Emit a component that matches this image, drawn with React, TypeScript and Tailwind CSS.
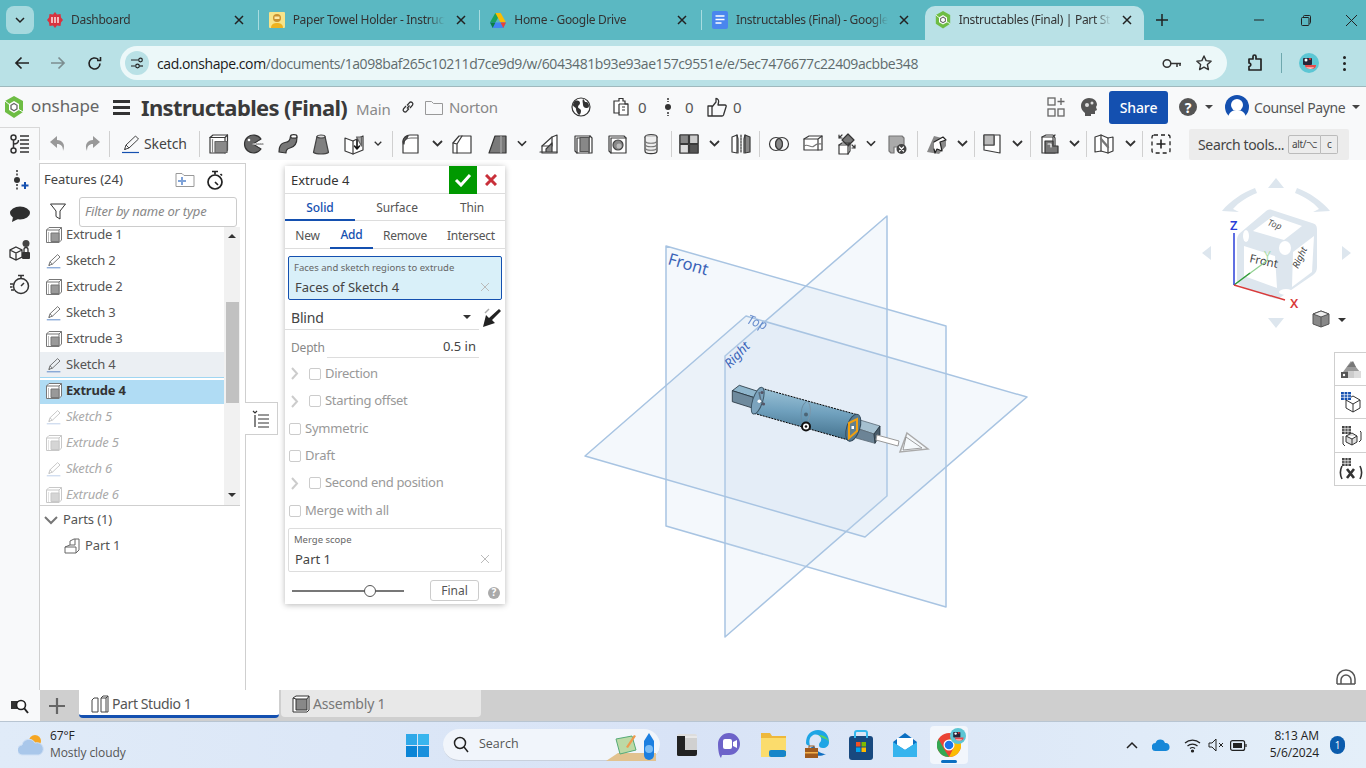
import React from "react";

type P = { children?: React.ReactNode; className?: string };

const I = ({ children, s = 22, v = 22, className = "" }: P & { s?: number; v?: number }) => (
  <svg width={s} height={s} viewBox={`0 0 ${v} ${v}`} fill="none" stroke="#3a3a3a" strokeWidth={1.2} strokeLinejoin="round" strokeLinecap="round" className={"shrink-0 " + className}>
    {children}
  </svg>
);

const Slot = ({ w, children }: { w: string; children?: React.ReactNode }) => (
  <div className={w + " h-full shrink-0 flex items-center justify-center"}>{children}</div>
);
const Sep = () => <div className="w-px h-[26px] bg-[#d0d0d0] shrink-0" />;
const Chev = () => (
  <svg width="11" height="7" viewBox="0 0 11 7" fill="none" stroke="#333" strokeWidth="1.8"><path d="M1 1l4.5 4.5L10 1" /></svg>
);

const ExtrudeIc = () => (
  <I>
    <path d="M2 4.5L5 2h14.5v15L17 20H2z" fill="#fff" />
    <path d="M2 4.5h15V20M17 4.5L19.5 2" />
    <rect x="7" y="8.5" width="12" height="11" fill="#8a8a8a" stroke="#666" />
    <path d="M4.5 6.5v13" stroke="#888" />
  </I>
);
const FeatExtrude = () => (
  <svg width="16" height="16" viewBox="0 0 16 16" fill="none" stroke="#777" strokeWidth="1" strokeLinejoin="round" className="shrink-0">
    <path d="M.5 3L3 .5h12.500V13L13 15.500H.5z" fill="#fff" />
    <path d="M.5 3h12.500v12.500M13 3l2.500-2.500" />
    <path d="M2.500 5v10" stroke="#bbb" />
    <rect x="5" y="6" width="8" height="8.500" fill="#999" stroke="#777" />
  </svg>
);
const RevolveIc = () => (
  <I>
    <path d="M19 6A9 9 0 1 0 19 16L11 11z" fill="#666" stroke="#333" />
    <circle cx="7" cy="7" r="1.3" fill="#fff" stroke="none" />
    <path d="M11 11h9M17 9l-2 2 2 2" stroke="#fff" strokeDasharray="1.6 1.2" />
    <path d="M14 11h8" stroke="#555" strokeDasharray="1 1" />
  </I>
);
const SweepIc = () => (
  <I>
    <path d="M2 19c0-6 1.5-9 6-9.5 4-.5 5-2 5.5-6.5L20 4c0 6-2 10-7 11-2.500.5-4 1.500-4 5z" fill="#777" stroke="#333" />
    <ellipse cx="16.800" cy="3.400" rx="3.200" ry="1.800" fill="#fff" stroke="#333" />
  </I>
);
const LoftIc = () => (
  <I>
    <path d="M7 3.500h8l3.500 16c-3 2-12 2-15 0z" fill="#808080" stroke="#444" />
    <ellipse cx="11" cy="3.500" rx="4" ry="1.500" fill="#ddd" stroke="#444" />
  </I>
);
const ThickenIc = () => (
  <I>
    <path d="M2 5l8 3 10-5v14l-10 4-8-3z" fill="#fff" />
    <path d="M10 8v13" />
    <path d="M13.500 4h5v9z" fill="#aaa" stroke="#666" />
    <path d="M14 7v9M11.500 13l2.500 3 2.500-3" stroke="#111" strokeWidth="1.600" />
  </I>
);
const FilletIc = () => (
  <I>
    <path d="M3 20V9c0-4 3-7 7-7h8v18z" fill="#fff" />
    <path d="M3 11c1-4 4-6 8-6h7" stroke="#666" />
    <path d="M3 9c0-3 2-5 5-6l-1 2c-2 1-3 3-3 6z" fill="#999" />
  </I>
);
const ChamferIc = () => (
  <I>
    <path d="M2 10l6-7h12v17H2z" fill="#fff" />
    <path d="M2 10l4 1 5-8M6 11v9" />
  </I>
);
const DraftIc = () => (
  <I>
    <path d="M8 3h11v17H2z" fill="#7a7a7a" stroke="#333" />
    <path d="M14 3v17" stroke="#aaa" />
  </I>
);
const RibIc = () => (
  <I>
    <path d="M4 20V13l10-9 5-2v18z" fill="#fff" />
    <path d="M14 4v9L4 13" />
    <path d="M2 19h17M8 16l6-6v9H8z" fill="#888" />
  </I>
);
const ShellIc = () => (
  <I>
    <path d="M3 3h15l2 2v15H5l-2-2z" fill="#fff" />
    <path d="M5 5h12v15M5 5v15M18 3l-1 2" />
    <rect x="8" y="4.500" width="9" height="14" fill="#888" stroke="#555" />
  </I>
);
const HoleIc = () => (
  <I>
    <path d="M3 3h15l2 2v15H5l-2-2z" fill="#fff" />
    <path d="M5 5h15M5 5v15" />
    <circle cx="12" cy="12" r="5" fill="#888" stroke="#444" />
    <circle cx="13" cy="13" r="2.500" fill="#bbb" stroke="none" />
  </I>
);
const HelixIc = () => (
  <I>
    <ellipse cx="11" cy="4" rx="6" ry="2.500" fill="#ccc" stroke="#444" />
    <path d="M5 4v14c0 3.500 12 3.500 12 0V4" fill="#eee" />
    <path d="M5 8c1 3 11 3 12 0M5 11.500c1 3 11 3 12 0M5 15c1 3 11 3 12 0" stroke="#777" />
  </I>
);
const PatternIc = () => (
  <I>
    <rect x="2" y="2" width="18" height="18" fill="#fff" />
    <rect x="2" y="2" width="8.500" height="8.500" fill="#888" />
    <rect x="2" y="11.500" width="8.500" height="8.500" fill="#ddd" />
    <rect x="11.500" y="11.500" width="8.500" height="8.500" fill="#555" />
    <rect x="11.500" y="2" width="8.500" height="8.500" fill="#ccc" />
  </I>
);
const MirrorIc = () => (
  <I>
    <path d="M2 4l5-2v18l-5-1z" fill="#fff" />
    <path d="M20 4l-5-2v18l5-1z" fill="#888" />
    <path d="M7 2l1 4v14M15 2l-1 4v14" />
    <path d="M11 2v18" strokeDasharray="2 1" />
  </I>
);
const BooleanIc = () => (
  <I>
    <circle cx="8" cy="11" r="6.500" fill="#fff" />
    <circle cx="14" cy="11" r="6.500" fill="#fff" fillOpacity=".1" />
    <path d="M11 5.300a6.500 6.500 0 0 1 0 11.400a6.500 6.500 0 0 1 0-11.400z" fill="#888" />
  </I>
);
const SplitIc = () => (
  <I>
    <path d="M2 6l5-3h13v14H2z" fill="#fff" />
    <path d="M2 6h14l4-3M16 6v11" />
    <path d="M2 13c4-3 7 3 10 0s5-2 8-2" stroke="#777" />
  </I>
);
const TransformIc = () => (
  <I>
    <path d="M12 1l6 6-6 6-6-6z" fill="#777" stroke="#333" />
    <path d="M3 12h9v9H3z" fill="#fff" />
    <path d="M3 12l3-2h8M12 12l2-2v8l-2 3" />
    <path d="M16 12l3 3M19 12v3h-3" />
    <path d="M6 2L3 5M3 2v3h3" />
  </I>
);
const DeleteIc = () => (
  <I>
    <path d="M3 3h13l2 2v9H8v6H5l-2-2z" fill="#aaa" stroke="#777" />
    <circle cx="15.500" cy="16" r="5" fill="#444" stroke="none" />
    <path d="M13.500 14l4 4M17.500 14l-4 4" stroke="#fff" />
  </I>
);
const PlaneIc = () => (
  <I>
    <path d="M1 19L8 3l8 2 4 3v5l-7 8z" fill="#888" stroke="none" />
    <path d="M8 9l9-5 3 3-6 2 2 9-5-2-2 4-1-4" fill="#fff" stroke="#222" />
  </I>
);
const SheetIc = () => (
  <I>
    <path d="M3 2h16v18l-16-3z" fill="#fff" />
    <path d="M3 12h10V3" stroke="#444" />
    <path d="M3 2h10v10H3z" fill="#bbb" stroke="#444" />
  </I>
);
const BoxArrowIc = () => (
  <I>
    <path d="M3 4l4-2h7l2 3v15H3z" fill="#fff" />
    <path d="M3 4h11l2-2M14 4v8" />
    <path d="M6 8h8v5h5v7H6z" fill="#777" stroke="#333" />
    <path d="M9 11h3v3" stroke="#fff" />
  </I>
);
const BookIc = () => (
  <I>
    <path d="M2 4l6-2 7 3 5-1v14l-5 2-7-2-6 1z" fill="#fff" />
    <path d="M8 2v16M15 5v15" />
    <path d="M8 6l7 8" stroke="#777" strokeWidth="2.400" />
  </I>
);

const Pencil = ({ s = 20, stroke = "#444", line = "#5a87c8" }: { s?: number; stroke?: string; line?: string }) => (
  <svg width={s} height={s} viewBox="0 0 20 20" fill="none" stroke={stroke} strokeWidth="1" strokeLinejoin="round" className="shrink-0">
    <path d="M3.500 15.500l1.500-4.500L14.500 2l3 3-9.500 9z" />
    <path d="M5 11l3 3M3.500 15.500l1.500-.5" />
    <path d="M1 18.500h17" stroke={line} strokeWidth="1.200" />
  </svg>
);

const Avatar = ({ s = 20 }: { s?: number }) => (
  <svg width={s} height={s} viewBox="0 0 20 20" className="shrink-0">
    <circle cx="10" cy="10" r="10" fill="#5cc6d4" />
    <rect x="4" y="5" width="9" height="7" rx="1" fill="#26263a" />
    <circle cx="7" cy="7" r="1.500" fill="#fff" />
    <circle cx="11" cy="6" r="1.100" fill="#e33" />
    <path d="M6 12h11c0 3-2 4-5 4s-6-1-6-4z" fill="#e94a4a" />
    <path d="M7 14.500h8c-1 1.500-6 1.500-8 0z" fill="#fff" />
  </svg>
);

const Logo = ({ s = 20 }: { s?: number }) => (
  <svg width={s} height={s * 1.1} viewBox="0 0 20 22" className="shrink-0">
    <path d="M10 0l9 5v11l-9 6-9-6V5z" fill="#6ebd44" />
    <path d="M10 5l5 3v6l-5 3-5-3V8z" fill="#fff" />
    <path d="M10 7.500l3 1.800v3.600l-3 1.800-3-1.800V9.300z" fill="none" stroke="#666" strokeWidth="1.300" />
    <path d="M1 5l5 4M19 16l-5-3" stroke="#fff" strokeWidth="1" />
  </svg>
);

const Favicon = ({ kind }: { kind: string }) => {
  if (kind === "dash")
    return (
      <svg width="16" height="16" viewBox="0 0 16 16" className="shrink-0">
        <path d="M8 0l2 2.500 3.500-.5.500 3.500L16 8l-2 2.500-.5 3.500-3.500-.5L8 16l-2-2.500-3.500.5-.5-3.500L0 8l2-2.500.5-3.500L6 2.500z" fill="#d9333f" />
        <path d="M4 5h2v6H4zM7 5h2v6H7zM10 5h2v6h-2z" fill="#f6b9bd" />
      </svg>
    );
  if (kind === "instr")
    return (
      <svg width="16" height="16" viewBox="0 0 16 16" className="shrink-0">
        <rect width="16" height="16" rx="1" fill="#f7e48a" />
        <circle cx="8" cy="6" r="4" fill="#c9912f" />
        <rect x="5.500" y="4.500" width="5" height="2.500" fill="#ffe9a8" />
        <path d="M2 16c0-4 3-5 6-5s6 1 6 5z" fill="#eeb320" />
      </svg>
    );
  if (kind === "drive")
    return (
      <svg width="16" height="15" viewBox="0 0 16 15" className="shrink-0">
        <path d="M5.300 0h5.400l-5.300 9.500H0z" fill="#1aa260" />
        <path d="M10.700 0L16 9.500h-5.400L5.300 0z" fill="#fbbc04" />
        <path d="M0 9.500h16L13.300 15H2.700z" fill="#4285f4" />
        <path d="M0 9.500h5.400L2.700 15z" fill="#0b8043" />
        <path d="M10.600 9.500H16L13.300 15z" fill="#ea4335" />
      </svg>
    );
  if (kind === "docs")
    return (
      <svg width="16" height="18" viewBox="0 0 16 18" className="shrink-0">
        <rect width="16" height="18" rx="2" fill="#4a86ee" />
        <path d="M3.500 5h9M3.500 8.500h9M3.500 12h6" stroke="#fff" strokeWidth="1.500" />
      </svg>
    );
  return <Logo s={16} />;
};

const Close = () => (
  <svg width="16" height="16" viewBox="0 0 16 16" stroke="#222" strokeWidth="1.500" className="shrink-0"><path d="M4 4l8 8M12 4l-8 8" /></svg>
);

const Tab = ({ kind, title, sep }: { kind: string; title: string; sep?: boolean }) => (
  <div className="relative w-[221.670px] h-[34px] mt-[6px] pb-[6px] shrink-0 flex items-center pl-[10px] text-[12px] text-[#333] tracking-[-0.300px]">
    <div className="w-4 flex justify-center shrink-0"><Favicon kind={kind} /></div>
    <div className="w-[152px] ml-2 whitespace-nowrap [mask-image:linear-gradient(to_right,#000_135px,transparent_152px)]">{title}</div>
    <div className="ml-2"><Close /></div>
    {sep && <div className="absolute right-0 top-[4px] h-[20px] w-[1px] bg-[#a8dce0]" />}
  </div>
);

const ChromeBar = () => (
  <>
    <div className="h-[40px] bg-[#5bb8c2] flex shrink-0">
      <div className="w-[37px] shrink-0 pl-[6px] pt-[6px]">
        <div className="w-[28px] h-[28px] rounded-[8px] bg-[#a5d9de] flex items-center justify-center">
          <svg width="10" height="7" viewBox="0 0 10 7" fill="none" stroke="#222" strokeWidth="1.500"><path d="M1 1l4 4 4-4" /></svg>
        </div>
      </div>
      <Tab kind="dash" title="Dashboard" sep />
      <Tab kind="instr" title="Paper Towel Holder - Instruct" sep />
      <Tab kind="drive" title="Home - Google Drive" sep />
      <Tab kind="docs" title="Instructables (Final) - Google" />
      <div className="relative w-[219px] h-[34px] mt-[6px] pb-[6px] shrink-0 bg-[#b9e1e6] rounded-t-[10px] flex items-center pl-[10px] text-[12px] text-[#333] tracking-[-0.300px] ml-[1px]">
        <div className="w-4 flex justify-center shrink-0"><Favicon kind="onshape" /></div>
        <div className="w-[152px] ml-2 whitespace-nowrap [mask-image:linear-gradient(to_right,#000_135px,transparent_152px)]">Instructables (Final) | Part Stu</div>
        <div className="ml-2"><Close /></div>
      </div>
      <div className="ml-[9px] w-[18px] h-full flex items-center justify-center">
        <svg width="12" height="12" viewBox="0 0 12 12" stroke="#222" strokeWidth="1.500"><path d="M6 0v12M0 6h12" /></svg>
      </div>
      <div className="ml-[75px] w-[26px] flex items-center justify-center">
        <svg width="10" height="10" viewBox="0 0 10 10" stroke="#222"><path d="M0 5h10" /></svg>
      </div>
      <div className="ml-[21px] w-[26px] flex items-center justify-center">
        <svg width="10" height="11" viewBox="0 0 10 11" fill="none" stroke="#222"><rect x=".5" y="2.500" width="7.500" height="8" rx="1" /><path d="M2.500 2.500v-1a1 1 0 0 1 1-1h5a1 1 0 0 1 1 1v6a1 1 0 0 1-1 1" /></svg>
      </div>
      <div className="ml-[20px] w-[26px] flex items-center justify-center">
        <svg width="11" height="11" viewBox="0 0 11 11" stroke="#222"><path d="M0 0l11 11M11 0L0 11" /></svg>
      </div>
    </div>
    <div className="h-[47px] bg-[#b9e1e6] border-b border-[#9fb9bd] flex items-center shrink-0 relative">
      <div className="w-[44px] flex justify-center">
        <svg width="16" height="14" viewBox="0 0 16 14" fill="none" stroke="#222" strokeWidth="1.700"><path d="M15 7H2M7.500 1.500L2 7l5.500 5.500" /></svg>
      </div>
      <div className="w-[28px] flex justify-center">
        <svg width="16" height="14" viewBox="0 0 16 14" fill="none" stroke="#7c8d90" strokeWidth="1.700"><path d="M1 7h13M8.500 1.500L14 7l-5.500 5.500" /></svg>
      </div>
      <div className="w-[44px] flex justify-center">
        <svg width="15" height="15" viewBox="0 0 15 15" fill="none" stroke="#222" strokeWidth="1.600"><path d="M13 7.500a5.500 5.500 0 1 1-1.700-4M13.500 1v3.500H10" /></svg>
      </div>
      <div className="ml-[4px] w-[1107px] h-[34px] rounded-full bg-[#ecf8f9] flex items-center pl-[5px]">
        <div className="w-[24px] h-[24px] rounded-full bg-[#b9e1e6] flex items-center justify-center shrink-0">
          <svg width="14" height="12" viewBox="0 0 14 12" fill="none" stroke="#222" strokeWidth="1.200"><path d="M1 3h7M1 9h4" /><circle cx="10.500" cy="3" r="1.800" /><circle cx="7.500" cy="9" r="1.800" /><path d="M9.500 9h3.500" /></svg>
        </div>
        <div className="ml-[8px] text-[14px] whitespace-nowrap text-[#5f6b6d] font-['Open_Sans',sans-serif] tracking-[-0.420px]"><span className="text-[#1a1a1a]">cad.onshape.com</span>/documents/1a098baf265c10211d7ce9d9/w/6043481b93e93ae157c9551e/e/5ec7476677c22409acbbe348</div>
        <div className="ml-auto flex items-center pr-[15px]">
          <svg width="20" height="11" viewBox="0 0 20 11" fill="none" stroke="#333" strokeWidth="1.500"><circle cx="5" cy="5.500" r="3.800" /><path d="M9 5.500h10M15 5.500v3.500M18 5.500v2.500" /></svg>
          <svg className="ml-[14px]" width="16" height="16" viewBox="0 0 16 16" fill="none" stroke="#333" strokeWidth="1.400" strokeLinejoin="round"><path d="M8 1l2.100 4.600 5 .6-3.700 3.400 1 5L8 12.100l-4.400 2.500 1-5L.9 6.200l5-.6z" /></svg>
        </div>
      </div>
      <div className="ml-[19px] w-[18px] flex justify-center">
        <svg width="18" height="18" viewBox="0 0 18 18" fill="none" stroke="#222" strokeWidth="1.700" strokeLinejoin="round"><path d="M3 5h4V2.500a1.500 1.500 0 0 1 3 0V5h5v11H3v-3.500a1.700 1.700 0 0 0 0-3.500z" /></svg>
      </div>
      <div className="ml-[17px] w-px h-[20px] bg-[#6ea8ae]" />
      <div className="ml-[17px]"><Avatar /></div>
      <div className="ml-[24px] flex flex-col gap-[3px]">
        <div className="w-[3px] h-[3px] rounded-full bg-[#222]" />
        <div className="w-[3px] h-[3px] rounded-full bg-[#222]" />
        <div className="w-[3px] h-[3px] rounded-full bg-[#222]" />
      </div>
    </div>
  </>
);

const Header = () => (
  <div className="h-[40px] bg-[#f8f9fa] flex items-center shrink-0 text-[#666]">
    <div className="ml-[4px]"><Logo s={20} /></div>
    <div className="ml-[7px] text-[17px] tracking-[-0.100px] text-[#666] -mt-[2px] w-[68px] shrink-0">onshape</div>
    <div className="ml-[14px] flex flex-col gap-[3px] shrink-0">
      <div className="w-[17px] h-[3px] bg-[#333]" />
      <div className="w-[17px] h-[3px] bg-[#333]" />
      <div className="w-[17px] h-[3px] bg-[#333]" />
    </div>
    <div className="ml-[11px] w-[206px] shrink-0 text-[22px] font-bold text-[#3a3a3a] tracking-[-0.640px] whitespace-nowrap">Instructables (Final)</div>
    <div className="ml-[9px] mt-[5px] w-[34px] shrink-0 text-[15px] text-[#8a8a8a] tracking-[-0.100px]">Main</div>
    <svg className="ml-[11px] shrink-0" width="14" height="14" viewBox="0 0 14 14" fill="none" stroke="#333" strokeWidth="1.300"><path d="M6 8.500l2.500-3M5 6L2.500 8.800a2 2 0 0 0 3 2.600L8 8.500M9 8l2.500-2.800a2 2 0 0 0-3-2.600L6 5.500" /></svg>
    <svg className="ml-[10px] shrink-0" width="18" height="15" viewBox="0 0 18 15" fill="none" stroke="#999"><path d="M.5 14.500v-13h6l2 2h9v11z" /></svg>
    <div className="ml-[6px] w-[48px] shrink-0 text-[15px] text-[#888] tracking-[-0.300px]">Norton</div>
    <svg className="ml-[74px] shrink-0" width="20" height="20" viewBox="0 0 20 20"><circle cx="10" cy="10" r="9" fill="#fff" stroke="#333" strokeWidth="1.200" /><path d="M4 4c3-1 5 0 5 2s-2 2-2 4 3 1 3 4-2 4-2 4c-2-2-3-4-3-6s-3-2-3-4 1-3 2-4zM12 2c2 1 1 3 3 3s3 2 3 4-2 2-3 2-3-1-3-3-1-4 0-6z" fill="#333" /></svg>
    <svg className="ml-[20px] shrink-0" width="20" height="20" viewBox="0 0 20 20" fill="none" stroke="#333" strokeWidth="1.200"><path d="M3 4h5V1.500h4V4h2v3h3v11H8v-2H3z" fill="#fff" /><path d="M8 7h9M8 7v9M11 10h3M11 13h3" /></svg>
    <div className="ml-[7px] w-[9px] shrink-0 text-[15px] text-[#555]">0</div>
    <svg className="ml-[18px] shrink-0" width="6" height="22" viewBox="0 0 6 22"><circle cx="3" cy="11" r="3" fill="#333" /><path d="M3 2v4M3 16v4" stroke="#333" strokeWidth="1.500" strokeDasharray="2 1" /></svg>
    <div className="ml-[14px] w-[9px] shrink-0 text-[15px] text-[#555]">0</div>
    <svg className="ml-[13px] shrink-0" width="20" height="20" viewBox="0 0 20 20" fill="none" stroke="#333" strokeWidth="1.300" strokeLinejoin="round"><path d="M1 9h4v10H1zM5 10l4-5V1.500c2 0 3 2 2.500 4L11 8h7c1 0 1.500 1 1 2l-2.500 8c-.3.700-1 1-1.500 1H5z" /></svg>
    <div className="ml-[6px] w-[9px] shrink-0 text-[15px] text-[#555]">0</div>
    <svg className="ml-[305px] shrink-0" width="18" height="22" viewBox="0 0 18 22" fill="none" stroke="#666" strokeWidth="1.300"><rect x="1" y="2" width="7" height="7" /><rect x="1" y="13" width="7" height="7" /><rect x="11" y="13" width="6" height="7" /><path d="M14 2v7M10.500 5.500h7" /></svg>
    <svg className="ml-[15px] shrink-0" width="18" height="20" viewBox="0 0 18 20"><path d="M9 1c5 0 8 3 8 7l-1 2 1 3-2 1v3h-4v2H5v-3C2 14 1 11 1 9c0-4 3-8 8-8z" fill="#555" /><circle cx="7" cy="8" r="2" fill="#ddd" /><circle cx="12" cy="6" r="1.500" fill="#ddd" /></svg>
    <div className="ml-[11px] w-[59px] h-[33px] shrink-0 bg-[#1450b0] rounded-[3px] text-white text-[14px] font-medium flex items-center justify-center tracking-[-0.100px]">Share</div>
    <div className="ml-[11px] w-[18px] h-[18px] shrink-0 rounded-full bg-[#555] text-white text-[14px] font-bold flex items-center justify-center">?</div>
    <div className="ml-[8px] shrink-0 w-0 h-0 border-x-[4px] border-x-transparent border-t-[4px] border-t-[#444]" />
    <svg className="ml-[12px] shrink-0" width="24" height="24" viewBox="0 0 24 24"><circle cx="12" cy="12" r="12" fill="#1450b0" /><circle cx="12" cy="10" r="6" fill="#fff" /><path d="M3 24c0-6 4-9 9-9s9 3 9 9z" fill="#fff" /></svg>
    <div className="ml-[5px] w-[91px] shrink-0 text-[14px] text-[#555] whitespace-nowrap tracking-[-0.400px]">Counsel Payne</div>
    <div className="ml-[7px] shrink-0 w-0 h-0 border-x-[4px] border-x-transparent border-t-[4px] border-t-[#444]" />
  </div>
);

const Toolbar = () => (
  <div className="h-[33px] bg-[#f8f9fa] flex items-center shrink-0">
    <div className="w-[40px] h-full border-r border-t border-[#d8d8d8] bg-[#f8f9fa] flex items-center justify-center shrink-0">
      <svg width="22" height="22" viewBox="0 0 22 22" fill="none" stroke="#333" strokeWidth="1.500"><circle cx="4.500" cy="4.500" r="2.500" /><circle cx="4.500" cy="17.500" r="2.500" /><path d="M4.500 7v8M4.500 11c4 0 5-2 5-4" /><path d="M11 3h9M11 7h9M11 11h9M11 15h9M11 19h9" /></svg>
    </div>
    <Slot w="w-[35px]"><svg width="16" height="15" viewBox="0 0 16 15" fill="#999"><path d="M7 0L0 6l7 6V8c4 0 6 2 6 7 3-7-1-11-6-11z" /></svg></Slot>
    <Slot w="w-[34px]"><svg width="16" height="15" viewBox="0 0 16 15" fill="#999"><path d="M9 0l7 6-7 6V8c-4 0-6 2-6 7C0 8 4 4 9 4z" /></svg></Slot>
    <Sep />
    <div className="w-[89px] h-full flex items-center shrink-0 pl-[11px]">
      <Pencil s={20} stroke="#444" line="#1450b0" />
      <span className="ml-[3px] text-[14px] text-[#444] tracking-[-0.100px]">Sketch</span>
    </div>
    <Sep />
    <Slot w="w-[38px]"><ExtrudeIc /></Slot>
    <Slot w="w-[30px]"><RevolveIc /></Slot>
    <Slot w="w-[40px]"><SweepIc /></Slot>
    <Slot w="w-[26px]"><LoftIc /></Slot>
    <Slot w="w-[40px]"><ThickenIc /></Slot>
    <Slot w="w-[8px]"><Chev /></Slot>
    <Slot w="w-[10px]" />
    <Sep />
    <Slot w="w-[36px]"><FilletIc /></Slot>
    <Slot w="w-[16px]"><Chev /></Slot>
    <Slot w="w-[34px]"><ChamferIc /></Slot>
    <Slot w="w-[38px]"><DraftIc /></Slot>
    <Slot w="w-[10px]"><Chev /></Slot>
    <Slot w="w-[44px]"><RibIc /></Slot>
    <Slot w="w-[24px]"><ShellIc /></Slot>
    <Slot w="w-[44px]"><HoleIc /></Slot>
    <Slot w="w-[24px]"><HelixIc /></Slot>
    <Slot w="w-[8px]" />
    <Sep />
    <Slot w="w-[34px]"><PatternIc /></Slot>
    <Slot w="w-[16px]"><Chev /></Slot>
    <Slot w="w-[37px]"><MirrorIc /></Slot>
    <Sep />
    <Slot w="w-[38px]"><BooleanIc /></Slot>
    <Slot w="w-[30px]"><SplitIc /></Slot>
    <Slot w="w-[38px]"><TransformIc /></Slot>
    <Slot w="w-[10px]"><Chev /></Slot>
    <Slot w="w-[41px]"><DeleteIc /></Slot>
    <Sep />
    <Slot w="w-[38px]"><PlaneIc /></Slot>
    <Slot w="w-[12px]"><Chev /></Slot>
    <Slot w="w-[6px]" />
    <Sep />
    <Slot w="w-[34px]"><SheetIc /></Slot>
    <Slot w="w-[17px]"><Chev /></Slot>
    <Slot w="w-[4px]" />
    <Sep />
    <Slot w="w-[37px]"><BoxArrowIc /></Slot>
    <Slot w="w-[12px]"><Chev /></Slot>
    <Slot w="w-[6px]" />
    <Sep />
    <Slot w="w-[34px]"><BookIc /></Slot>
    <Slot w="w-[18px]"><Chev /></Slot>
    <Slot w="w-[3px]" />
    <Sep />
    <Slot w="w-[36px]">
      <svg width="20" height="20" viewBox="0 0 20 20" fill="none" stroke="#222" strokeWidth="1.300"><rect x="1" y="1" width="18" height="18" rx="2" strokeDasharray="4 3" /><path d="M10 5.500v9M5.500 10h9" strokeWidth="1.600" /></svg>
    </Slot>
    <div className="ml-[10px] w-[160px] h-[31px] mt-[2px] bg-[#ececec] rounded-[2px] flex items-center pl-[9px] text-[14px] text-[#444] whitespace-nowrap shrink-0 tracking-[-0.350px]">
      Search tools...
      <div className="ml-[4px] flex">
        <div className="w-[33px] h-[19px] border border-[#bbb] rounded-l-[2px] text-[10px] flex items-center justify-center">alt/⌥</div>
        <div className="w-[17px] h-[19px] border border-l-0 border-[#bbb] rounded-r-[2px] text-[10px] flex items-center justify-center">c</div>
      </div>
    </div>
  </div>
);

const RailIcons = () => (
  <div className="w-[40px] shrink-0 bg-[#f8f9fa] flex flex-col items-center">
    <svg className="mt-[10px]" width="20" height="20" viewBox="0 0 20 20"><circle cx="7" cy="10" r="3" fill="#333" /><path d="M7 0v6M7 14v6" stroke="#333" strokeWidth="1.500" strokeDasharray="2 1.500" /><path d="M15 12v7M11.500 15.500h7" stroke="#1450b0" strokeWidth="2" /></svg>
    <svg className="mt-[14px]" width="20" height="20" viewBox="0 0 20 20"><ellipse cx="10" cy="9" rx="10" ry="6.500" fill="#2e2e2e" /><path d="M3 13l-1 5 6-3z" fill="#2e2e2e" /></svg>
    <svg className="mt-[15px]" width="22" height="22" viewBox="0 0 22 22" fill="none" stroke="#333" strokeWidth="1.300"><path d="M7 8l6 3v7l-6 3-6-3v-7zM1 11l6 3 6-3M7 14v7" /><circle cx="17" cy="4.500" r="3.500" fill="#444" stroke="none" /><rect x="13" y="13" width="8" height="7" rx="1" fill="#333" stroke="none" /><path d="M15 13v-2.500a2 2 0 0 1 4 0V13" /></svg>
    <svg className="mt-[13px]" width="20" height="22" viewBox="0 0 20 22" fill="none" stroke="#333" strokeWidth="1.500"><circle cx="11" cy="12" r="7.500" /><path d="M8 1.500h6M11 1.500v3M11 12l3-3M0 10h3M0 13h2.500M1 16h3" /></svg>
  </div>
);

const Row = ({ type, name, dim, active, hover }: { type: "e" | "s"; name: string; dim?: boolean; active?: boolean; hover?: boolean }) => (
  <div className={"h-[26px] flex items-center pl-[6px] shrink-0 " + (active ? "bg-[#b0dcf4] border-t-2 border-white pb-[2px] " : "") + (hover ? "bg-[#ebeff3] border-b border-[#9fd6f2] " : "")}>
    <div className={dim ? "opacity-40 flex" : "flex"}>
      {type === "e" ? <FeatExtrude /> : <Pencil s={16} stroke="#555" />}
    </div>
    <span className={"ml-[4px] -mt-[2px] text-[13px] leading-[14px] whitespace-nowrap tracking-[-0.200px] " + (dim ? "italic text-[#aaa]" : active ? "font-bold text-[#333]" : "text-[#555]")}>{name}</span>
  </div>
);

const FeaturePanel = () => (
  <div className="w-[207px] mt-[3px] shrink-0 bg-white border-t border-r border-l border-[#cfcfcf] flex flex-col relative -ml-px">
    <div className="h-[32px] flex items-center pl-[4px] shrink-0">
      <span className="text-[13px] text-[#444] w-[81px] shrink-0">Features (24)</span>
      <svg className="ml-[50px] shrink-0" width="20" height="16" viewBox="0 0 20 16" fill="none" stroke="#999"><path d="M1 14.500V1.500h6l2 2h10v11z" /><path d="M3 9h8M7 5v8" stroke="#7ea2d8" strokeWidth="2" /></svg>
      <svg className="ml-[11px] shrink-0" width="18" height="20" viewBox="0 0 18 20" fill="none" stroke="#222" strokeWidth="1.700"><circle cx="9" cy="12" r="7" /><path d="M6 1.500h6M9 1.500v3M9 12l3 3M14.500 4l1.500 1.500" /></svg>
    </div>
    <div className="h-[31px] flex items-center shrink-0">
      <svg className="ml-[10px]" width="16" height="17" viewBox="0 0 16 17" fill="none" stroke="#333"><path d="M.5 1h15L10 8v8L6 13.500V8z" /></svg>
      <div className="ml-[13px] w-[158px] h-[30px] border border-[#ccc] rounded-[3px] flex items-center pl-[5px] text-[13px] italic text-[#888] tracking-[-0.180px] whitespace-nowrap">Filter by name or type</div>
    </div>
    <div className="h-[279px] w-[200px] border-b border-[#cfcfcf] flex overflow-hidden shrink-0">
      <div className="w-[184px] -mt-[5px] flex flex-col">
        <Row type="e" name="Extrude 1" />
        <Row type="s" name="Sketch 2" />
        <Row type="e" name="Extrude 2" />
        <Row type="s" name="Sketch 3" />
        <Row type="e" name="Extrude 3" />
        <Row type="s" name="Sketch 4" hover />
        <Row type="e" name="Extrude 4" active />
        <Row type="s" name="Sketch 5" dim />
        <Row type="e" name="Extrude 5" dim />
        <Row type="s" name="Sketch 6" dim />
        <Row type="e" name="Extrude 6" dim />
      </div>
      <div className="w-[16px] bg-[#f1f1f1] flex flex-col items-center relative">
        <div className="mt-[7px] w-0 h-0 border-x-[4px] border-x-transparent border-b-[4px] border-b-[#333]" />
        <div className="mt-[64px] w-[13px] h-[101px] bg-[#c1c1c1]" />
        <div className="mt-[90px] w-0 h-0 border-x-[4px] border-x-transparent border-t-[4px] border-t-[#333]" />
      </div>
    </div>
    <div className="h-[27px] pt-px flex items-center pl-[4px] text-[13px] text-[#555]">
      <svg width="14" height="9" viewBox="0 0 14 9" fill="none" stroke="#777" strokeWidth="2"><path d="M1 1l6 6 6-6" /></svg>
      <span className="ml-[5px] tracking-[-0.100px]">Parts (1)</span>
    </div>
    <div className="h-[26px] flex items-center pl-[24px] text-[13px] text-[#555]">
      <svg width="17" height="17" viewBox="0 0 17 17" fill="none" stroke="#666"><path d="M1 9l5-2V3l4-2h5v11l-3 3H1zM6 7h5V1M1 9h11v6" /></svg>
      <span className="ml-[4px] tracking-[-0.100px]">Part 1</span>
    </div>
    <div className="absolute left-[205px] top-[238px] w-[33px] h-[33px] bg-white border border-[#cfcfcf] border-l-0 flex items-center justify-center">
      <svg width="18" height="18" viewBox="0 0 18 18" fill="none" stroke="#333" strokeWidth="1.200"><path d="M3 5v12" strokeWidth="1.800" stroke="#777" /><path d="M6 5h11M6 9h11M6 13h11M6 17h11" /><path d="M1 1l2 2 2-2" /></svg>
    </div>
  </div>
);

const Cb = () => <div className="w-[12px] h-[12px] border border-[#ccc] rounded-[2px] bg-white shrink-0" />;
const Chv = () => (
  <svg width="8" height="13" viewBox="0 0 8 13" fill="none" stroke="#ccc" strokeWidth="2" className="shrink-0"><path d="M1 1l5 5.500L1 12" /></svg>
);
const ExpandRow = ({ label, h }: { label: string; h: string }) => (
  <div className={h + " flex items-center pl-[6px] text-[13px] text-[#999] tracking-[-0.300px] shrink-0"}>
    <Chv />
    <div className="ml-[10px]"><Cb /></div>
    <span className="ml-[4px]">{label}</span>
  </div>
);
const CheckRow = ({ label, h }: { label: string; h: string }) => (
  <div className={h + " flex items-center pl-[4px] text-[13px] text-[#999] tracking-[-0.200px] shrink-0"}>
    <Cb />
    <span className="ml-[4px]">{label}</span>
  </div>
);
const X = ({ c = "#bbb" }: { c?: string }) => (
  <svg width="8" height="8" viewBox="0 0 8 8" stroke={c} strokeWidth="1"><path d="M0 0l8 8M8 0L0 8" /></svg>
);

const Dialog = () => (
  <div className="absolute left-[285px] top-[6px] w-[220px] h-[438px] bg-white shadow-[0_1px_6px_rgba(0,0,0,0.28)] flex flex-col text-[#444]">
    <div className="h-[28px] flex items-center shrink-0 border-b border-[#ddd]">
      <span className="ml-[6px] pt-[2px] text-[13px] text-[#333]">Extrude 4</span>
      <div className="ml-auto w-[28px] h-[28px] bg-[#009900] flex items-center justify-center">
        <svg width="18" height="14" viewBox="0 0 18 14" fill="none" stroke="#fff" strokeWidth="3"><path d="M2 7l5 5 9-10" /></svg>
      </div>
      <div className="w-[28px] flex items-center justify-center">
        <svg width="12" height="12" viewBox="0 0 12 12" stroke="#c9303a" strokeWidth="3"><path d="M1 1l10 10M11 1L1 11" /></svg>
      </div>
    </div>
    <div className="h-[27px] flex items-stretch border-b border-[#ddd] text-[12px] tracking-[-0.100px] shrink-0">
      <div className="w-[70px] pt-[2px] flex items-center justify-center text-[#1450b0] font-medium border-b-2 border-[#1450b0] -mb-px">Solid</div>
      <div className="w-[84px] pt-[2px] flex items-center justify-center text-[#555]">Surface</div>
      <div className="flex-1 pt-[2px] flex items-center justify-center text-[#555]">Thin</div>
    </div>
    <div className="h-[28px] flex items-stretch border-b border-[#ddd] text-[12px] tracking-[-0.250px] shrink-0">
      <div className="w-[45px] pt-[2px] flex items-center justify-center text-[#555]">New</div>
      <div className="w-[43px] pt-[2px] flex items-center justify-center text-[#1450b0] font-medium border-b-2 border-[#1450b0] -mb-px">Add</div>
      <div className="w-[64px] pt-[2px] flex items-center justify-center text-[#555]">Remove</div>
      <div className="flex-1 pt-[2px] flex items-center justify-center text-[#555]">Intersect</div>
    </div>
    <div className="mt-[7px] mx-[3px] h-[44px] bg-[#d9f0f9] border border-[#1450b0] rounded-[2px] pl-[5px] pr-[6px] pt-[4px] shrink-0">
      <div className="text-[9.500px] text-[#666] leading-[13px]">Faces and sketch regions to extrude</div>
      <div className="mt-[3px] pl-px flex items-center justify-between pr-[6px] text-[13px] leading-[20px] text-[#444]">Faces of Sketch 4<X /></div>
    </div>
    <div className="mt-[5px] h-[25px] flex items-center shrink-0">
      <div className="ml-0 w-[194px] h-full border-b border-[#ddd] flex items-center pl-[6px] pr-[8px] text-[14px] text-[#444] tracking-[-0.200px] justify-between">
        Blind
        <div className="w-0 h-0 border-x-[4px] border-x-transparent border-t-[4px] border-t-[#333]" />
      </div>
      <svg className="ml-[3px] shrink-0" width="20" height="20" viewBox="0 0 20 20"><path d="M1 19L4 7l3 3L17 1l2 2-9 9 3 3z" fill="#222" /><path d="M3 5l4-4" stroke="#aaa" strokeWidth="1.500" /></svg>
    </div>
    <div className="h-[28px] flex items-center shrink-0 text-[12px] text-[#888] pt-[7px]">
      <span className="ml-[6px] w-[36px] tracking-[-0.200px]">Depth</span>
    </div>
    <div className="h-0 relative shrink-0">
      <div className="absolute left-[42px] -top-[28px] w-[152px] h-[28px] border-b border-[#ddd] flex items-center justify-end pr-[3px] pt-[7px] text-[13px] text-[#444]">0.5 in</div>
    </div>
    <div className="h-px shrink-0" />
    <ExpandRow label="Direction" h="h-[29px]" />
    <ExpandRow label="Starting offset" h="h-[26px]" />
    <CheckRow label="Symmetric" h="h-[29px]" />
    <CheckRow label="Draft" h="h-[26px]" />
    <ExpandRow label="Second end position" h="h-[28px]" />
    <CheckRow label="Merge with all" h="h-[28px]" />
    <div className="mt-[3px] mx-[3px] h-[44px] border border-[#ddd] rounded-[2px] pl-[5px] pr-[6px] pt-[4px] shrink-0">
      <div className="text-[9.500px] text-[#666] leading-[13px]">Merge scope</div>
      <div className="mt-[3px] pl-px flex items-center justify-between pr-[6px] text-[13px] leading-[20px] text-[#444]">Part 1<X /></div>
    </div>
    <div className="mt-[8px] flex items-center pl-[7px] shrink-0 relative">
      <div className="w-[112px] h-[2px] bg-[#777] relative">
        <div className="absolute left-[72px] -top-[5px] w-[12px] h-[12px] rounded-full bg-white border border-[#555]" />
      </div>
      <div className="ml-[26px] w-[49px] h-[21px] border border-[#ccc] rounded-[3px] text-[12px] text-[#555] flex items-center justify-center">Final</div>
      <div className="ml-[9px] mt-[4px] w-[12px] h-[12px] rounded-full bg-[#aaa] text-white text-[10px] font-bold flex items-center justify-center">?</div>
    </div>
  </div>
);

const Scene = () => (
  <svg className="w-full h-full block" viewBox="246 160 1120 530" preserveAspectRatio="none" fontFamily="Noto Sans, sans-serif">
    <defs>
      <linearGradient id="cyl" x1="0.420" y1="0" x2="0.300" y2="1">
        <stop offset="0" stopColor="#9ec4d8" />
        <stop offset="0.450" stopColor="#6fa0bd" />
        <stop offset="1" stopColor="#3f6c87" />
      </linearGradient>
    </defs>
    <g fill="#c9dcee" fillOpacity=".2" stroke="#a8c4e2" strokeWidth="1.500" strokeLinejoin="round">
      <polygon points="666,246 946,326 946,607 666,526" />
      <polygon points="725,356 887,216 887,496 725,637" />
      <polygon points="746,316 1027,397 865,537 585,456" />
    </g>
    <text transform="translate(667,264) rotate(16)" fontSize="16.500" fill="#3a63b8">Front</text>
    <text transform="translate(746,323) rotate(20)" fontSize="13" fontStyle="italic" fill="#4d78c4" opacity=".8">Top</text>
    <text transform="translate(730,369) rotate(-47)" fontSize="13" fontStyle="italic" fill="#3a63b8">Right</text>
    <g stroke="#22303a" strokeWidth=".8" strokeLinejoin="round">
      <polygon points="732.300,390.700 739.300,385.300 760,392 753.300,397.300" fill="#8fb6cc" />
      <polygon points="732.300,390.700 753.300,397.300 753.300,408.300 732.300,401.700" fill="#6e8a9d" />
      <polygon points="860,420 880,426 874,434 856.700,428.300" fill="#a5c0d0" stroke="#5a6a75" />
      <polygon points="856.700,428.300 874,434 875,443.300 856,438" fill="#6c8496" stroke="#5a6a75" />
      <polygon points="874,434 880,426 880,435 875,443.300" fill="#4a5c6a" />
    </g>
    <polygon points="761.700,388.300 858.300,415 848.300,440 754,413.300" fill="url(#cyl)" />
    <path d="M761.700 388.300L858.300 415M848.300 440L754 413.300" stroke="#000" strokeWidth="1" strokeDasharray="2 1" />
    <ellipse cx="757.700" cy="400.700" rx="5" ry="14" transform="rotate(18 757.700 400.700)" fill="#7ba3bd" stroke="#3d5666" />
    <path d="M761 401l-2-9M759 401l5 3" stroke="#5a6f7f" strokeWidth="1.500" />
    <circle cx="759.300" cy="401.200" r="1.800" fill="#fff" />
    <circle cx="762" cy="392.500" r="1.600" fill="#556" />
    <circle cx="763.500" cy="404" r="1.600" fill="#556" />
    <path d="M807 401c5 3 5 20 -4 26" fill="none" stroke="#7c97aa" />
    <path d="M807 401c-7 4 -7 17 -4 26" fill="none" stroke="#6c8da3" />
    <circle cx="806" cy="414.500" r="2" fill="#4d6575" />
    <ellipse cx="853.300" cy="427.700" rx="6.500" ry="14" transform="rotate(18 853.300 427.700)" fill="#577b92" stroke="#33495a" />
    <polygon points="849,423 857,419 857,431 849,438" fill="#62808f" stroke="#f0a010" strokeWidth="2" />
    <rect x="851.500" y="426" width="2.500" height="3" fill="#fff" />
    <circle cx="806" cy="426.500" r="5" fill="#111" />
    <circle cx="806" cy="426.500" r="3" fill="#fff" />
    <circle cx="806" cy="426.500" r="1.300" fill="#111" />
    <polygon points="877,435 899,441 898,446 876,440" fill="#fff" stroke="#999" />
    <polygon points="907,433 928,449 900,452" fill="#fff" fillOpacity=".5" stroke="#aaa" strokeWidth="1.500" />
    <polygon points="906,437 922,448 903,450" fill="none" stroke="#888" strokeWidth=".8" />
    <g fill="none" stroke="#555" strokeWidth="1.500">
      <path d="M1337 684v-5a9 9 0 0 1 18 0v5" />
      <path d="M1341 684v-4a5 5 0 0 1 10 0v4M1337 684h18" />
    </g>
  </svg>
);

const ViewCube = () => (
  <svg className="absolute left-[1180px] top-[10px]" width="186" height="170" viewBox="0 0 186 170" fontFamily="Noto Sans, sans-serif">
    <g fill="#dde6ee">
      <path d="M96 8l-8 10h16zM22 83l9-7v14zM171 83l-9-7v14zM96 158l-8-10h16z" />
      <path d="M42 41c8-10 20-18 33-23l2 5c-10 4-18 9-24 16l6 3z" />
      <path d="M150 41c-8-10-20-18-33-23l-2 5c10 4 18 9 24 16l-6 3z" />
      <path d="M92 40l40 13c4 1 5 3 5 7v37c0 3-1 6-4 8l-32 22c-3 2-5 2-8 1L63 117c-4-2-6-4-6-8V70c0-3 1-5 3-7l25-21c2-2 4-3 7-2z" />
    </g>
    <g fill="#fff">
      <path d="M93 46l29 10-18 14-31-9z" />
      <path d="M64 76l31 10 2 32-33-12z" />
      <path d="M134 66l-2 36-20 15 1-35z" />
      <ellipse cx="105" cy="78" rx="6" ry="7" />
      <ellipse cx="106" cy="122" rx="7" ry="3" />
      <ellipse cx="66" cy="66" rx="3" ry="6" />
    </g>
    <text transform="translate(87,55) rotate(20)" fontSize="9" fontStyle="italic" fill="#555">Top</text>
    <text transform="translate(69,92) rotate(12)" fontSize="11.500" fill="#444">Front</text>
    <text transform="translate(118,99) rotate(-65)" fontSize="9.500" fontStyle="italic" fill="#444">Right</text>
    <path d="M54 115L88 90" stroke="#8fd08f" strokeWidth="1.200" />
    <path d="M54 115L70 103" stroke="#2f9a3a" strokeWidth="1.200" />
    <path d="M54 115V63" stroke="#2a3fd8" strokeWidth="1.500" />
    <path d="M54 115L105 130" stroke="#d93a3a" strokeWidth="1.500" />
    <text x="50" y="60" fontSize="13" fontWeight="600" fill="#2a3fd8">Z</text>
    <text x="110" y="138" fontSize="13" fontWeight="600" fill="#d93a3a">X</text>
    <text x="84" y="90" fontSize="12" fill="#a8dca8">Y</text>
    <path d="M141 141l8 3v10l-8 3-8-3v-10z" fill="#888" stroke="#555" />
    <path d="M133 144l8 3 8-3-8-3z" fill="#eee" stroke="#555" />
    <path d="M141 147v10" stroke="#555" />
    <path d="M158 148h8l-4 4z" fill="#333" />
  </svg>
);

const SidePanel = () => (
  <div className="absolute right-0 top-[192px] w-[32px] bg-white border border-r-0 border-[#cfcfcf] flex flex-col">
    <div className="h-[33px] flex items-center justify-center border-b border-[#cfcfcf]">
      <svg width="22" height="22" viewBox="0 0 22 22"><path d="M3 14l8-11 9 11z" fill="#999" /><path d="M7 9l6-6 3 6z" fill="#777" /><rect x="1" y="14" width="7" height="6" fill="#555" /><rect x="8" y="13" width="6" height="7" fill="#ccc" /><rect x="14" y="13" width="7" height="7" fill="#ddd" /><circle cx="4" cy="17" r="1.200" fill="#fff" /></svg>
    </div>
    <div className="h-[33px] flex items-center justify-center border-b border-[#cfcfcf]">
      <svg width="22" height="22" viewBox="0 0 22 22" fill="none" stroke="#333"><path d="M13 5l7 4v8l-7 4-7-4V9zM6 9l7 4 7-4M13 13v8" /><rect x="1" y="1" width="10" height="8" fill="#1450b0" stroke="none" /><path d="M1 3.700h10M1 6.300h10M4.300 1v8M7.600 1v8" stroke="#fff" strokeWidth=".7" /></svg>
    </div>
    <div className="h-[34px] flex items-center justify-center border-b border-[#cfcfcf]">
      <svg width="22" height="22" viewBox="0 0 22 22" fill="none" stroke="#333"><rect x="2" y="1" width="9" height="8" fill="#444" stroke="none" /><path d="M2 3.700h9M2 6.300h9M5 1v8M8 1v8" stroke="#fff" strokeWidth=".7" /><path d="M12 8l5 3v6l-5 3-6-3v-6zM6 11l6 3 5-3M12 14v6" fill="#ddd" /><path d="M3 11v8l2 2M20 6l1 1v8l-2 2" /></svg>
    </div>
    <div className="h-[32px] flex items-center justify-center">
      <svg width="24" height="24" viewBox="0 0 24 24" fill="none" stroke="#333"><rect x="3" y="1" width="9" height="8" fill="#444" stroke="none" /><path d="M3 3.700h9M3 6.300h9M6 1v8M9 1v8" stroke="#fff" strokeWidth=".7" /><path d="M3 9c-2 4-2 9 0 13M21 9c2 4 2 9 0 13" strokeWidth="1.600" /><path d="M8 12l7 9M15 12l-7 9" strokeWidth="2.600" /></svg>
    </div>
  </div>
);

const BottomTabs = () => (
  <div className="h-[31px] flex shrink-0 bg-[#cfcfcf]">
    <div className="w-[40px] bg-[#f8f9fa] flex items-center justify-center">
      <svg width="20" height="18" viewBox="0 0 20 18"><path d="M1 4h12v8H1z" fill="#333" /><circle cx="11" cy="8" r="4.500" fill="#fff" stroke="#222" strokeWidth="1.600" /><path d="M14 11l4 5" stroke="#222" strokeWidth="2" /></svg>
    </div>
    <div className="w-[39px] pr-[5px] flex items-center justify-center">
      <svg width="16" height="16" viewBox="0 0 16 16" stroke="#666" strokeWidth="2.200"><path d="M8 0v16M0 8h16" /></svg>
    </div>
    <div className="w-[200px] h-[28px] pt-[2px] bg-white border-b-[3px] border-[#1450b0] rounded-b-[4px] flex items-center pl-[12px] text-[14px] text-[#555] tracking-[-0.400px]">
      <svg width="18" height="18" viewBox="0 0 18 18" fill="none" stroke="#444"><path d="M1 5l2-2h4v14H1zM10 3l2-2h5v16h-7zM10 3h5v14M15 3l2-2" /></svg>
      <span className="ml-[3px]">Part Studio 1</span>
    </div>
    <div className="ml-[2px] w-[200px] h-[27px] bg-[#e8e8e8] rounded-b-[4px] flex items-center pl-[11px] text-[14px] text-[#777] tracking-[-0.200px]">
      <svg width="18" height="18" viewBox="0 0 18 18" stroke="#333"><path d="M1 3l3-2h13v14l-2 2H1z" fill="#fff" /><path d="M4 4h11v11H4z" fill="#888" /><path d="M1 3l3 1M17 1l-2 3" /></svg>
      <span className="ml-[3px]">Assembly 1</span>
    </div>
  </div>
);

const TaskIc = ({ children, w }: { children: React.ReactNode; w: string }) => (
  <div className={w + " flex items-center justify-center shrink-0"}>{children}</div>
);

const Taskbar = () => (
  <div className="h-[47px] bg-linear-to-r from-[#e0ebf8] via-[#d8e3f6] to-[#e4eff9] border-t border-[#b8c5d2] flex items-center shrink-0 font-['Open_Sans',sans-serif]">
    <svg className="ml-[18px]" width="26" height="24" viewBox="0 0 26 24"><circle cx="17" cy="8" r="6" fill="#f5a623" /><path d="M5 22a5 5 0 0 1-1-10 7 7 0 0 1 13-2 6 6 0 0 1 4 12z" fill="#a9c7ea" stroke="#cfe0f5" /></svg>
    <div className="ml-[6px] w-[100px] -mt-[3px] leading-[17px] text-[12px] tracking-[-0.100px]">
      <div className="text-[#222]">67°F</div>
      <div className="text-[#555]">Mostly cloudy</div>
    </div>
    <svg className="ml-[256px]" width="23" height="23" viewBox="0 0 24 24"><path d="M0 0h11.500v11.500H0z" fill="#2fa8e8" /><path d="M12.500 0H24v11.500H12.500z" fill="#38b5ee" /><path d="M0 12.500h11.500V24H0z" fill="#0a84d6" /><path d="M12.500 12.500H24V24H12.500z" fill="#1a90dc" /></svg>
    <div className="ml-[14px] w-[217px] h-[32px] rounded-full bg-[#f1f5fb] border-b border-[#c8d0dc] flex items-center pl-[10px] shrink-0">
      <svg width="16" height="17" viewBox="0 0 16 17" fill="none" stroke="#222" strokeWidth="1.500"><circle cx="7" cy="7" r="5.500" /><path d="M11 11l4 5" /></svg>
      <span className="ml-[10px] text-[12.500px] text-[#555]">Search</span>
      <svg className="ml-auto mr-[2px]" width="52" height="32" viewBox="0 0 52 32"><path d="M0 32l12-8h38v8z" fill="#e2c28f" /><path d="M10 10l16-3 4 14-16 4z" fill="#bcd9a5" stroke="#5a7" /><path d="M20 18l8-12 2 1-8 12z" fill="#ee9a4d" /><path d="M38 12l5-8 5 8v14a5 5 0 0 1-10 0z" fill="#1c7fe0" /><circle cx="43" cy="20" r="4" fill="#7dbdf5" /></svg>
    </div>
    <TaskIc w="w-[50px] ml-0">
      <div className="w-[20px] h-[22px] bg-[#e8e8e8] rounded-[2px] border-t-[2px] border-[#ddd] relative overflow-hidden ml-[3px]">
        <div className="absolute inset-x-0 bottom-0 h-[8px] bg-[#222]" />
        <div className="absolute left-0 top-0 w-[8px] h-full bg-[#222]" />
        <div className="absolute left-[8px] top-[2px] w-[12px] h-[12px] bg-[#d0d0d0]" />
      </div>
    </TaskIc>
    <TaskIc w="w-[38px]">
      <svg width="24" height="26" viewBox="0 0 24 26"><path d="M12 1a11 11 0 0 1 0 22H5l-1 3c-2-2-3-8-3-14A11 11 0 0 1 12 1z" fill="#6d63c9" /><rect x="6" y="7" width="9" height="10" rx="2" fill="#fff" /><path d="M16 10l4-2v8l-4-2z" fill="#fff" /></svg>
    </TaskIc>
    <TaskIc w="w-[50px]">
      <svg width="25" height="26" viewBox="0 0 25 26"><path d="M0 1h9l2 3h14v21H0z" fill="#eeb83b" /><path d="M0 6h25v19H0z" fill="#fbdc6c" /><path d="M10 18h12a2 2 0 0 1 0 7H10a2 2 0 0 1-2-2v-3a2 2 0 0 1 2-2z" fill="#1685c9" /></svg>
    </TaskIc>
    <TaskIc w="w-[38px]">
      <svg width="25" height="32" viewBox="0 0 25 32"><path d="M1 14C1 6 6 1 13 1s11 5 11 12c0 4-3 6-6 6s-4-1-4-3c0-3 3-3 2-7-1-3-6-5-9-2-3 2-3 6-2 10-2-1-4-1-4-3z" fill="#1ea5e5" /><path d="M3 20c3 6 10 9 18 5-4 0-9-2-12-8z" fill="#0f6ec1" /><path d="M14 6c5 0 9 3 10 7-3-5-8-3-10-7z" fill="#58d35f" /><rect x="0" y="19" width="13" height="10" fill="#a05a1e" /><rect x="4" y="17" width="5" height="3" fill="none" stroke="#a05a1e" /><rect x="0" y="23" width="13" height="1.500" fill="#f2b04d" /></svg>
    </TaskIc>
    <TaskIc w="w-[50px]">
      <svg width="24" height="30" viewBox="0 0 24 30"><rect y="6" width="24" height="24" rx="3" fill="#18497f" /><path d="M6 8V3a2 2 0 0 1 2-2h8a2 2 0 0 1 2 2v5" fill="none" stroke="#35b8ee" strokeWidth="2" /><rect x="7" y="12" width="4.500" height="4.500" fill="#f25022" /><rect x="12.500" y="12" width="4.500" height="4.500" fill="#7fba00" /><rect x="7" y="17.500" width="4.500" height="4.500" fill="#00a4ef" /><rect x="12.500" y="17.500" width="4.500" height="4.500" fill="#ffb900" /></svg>
    </TaskIc>
    <TaskIc w="w-[38px]">
      <svg width="24" height="24" viewBox="0 0 24 24"><path d="M12 0l12 9v15H0V9z" fill="#0a6fc2" /><path d="M4 5h16v7l-8 5-8-5z" fill="#fff" /><path d="M0 9v15h24V9l-12 8z" fill="#36b4ee" /></svg>
    </TaskIc>
    <div className="ml-[6px] w-[38px] h-[38px] bg-[#f2f6fc] rounded-[4px] relative shrink-0 flex items-center justify-center">
      <svg width="24" height="24" viewBox="0 0 24 24"><circle cx="12" cy="12" r="12" fill="#ea4335" /><path d="M12 24a12 12 0 0 0 10.500-18H12l5 8z" fill="#fbbc04" /><path d="M1.500 6L7 16l5 8a12 12 0 0 1-10.500-18z" fill="#34a853" /><circle cx="12" cy="12" r="5.500" fill="#fff" /><circle cx="12" cy="12" r="4.300" fill="#1a73e8" /></svg>
      <div className="absolute left-[20px] top-[2px]"><Avatar s={16} /></div>
      <div className="absolute left-[11px] bottom-[1px] w-[16px] h-[3px] rounded-full bg-[#0a6fc2]" />
    </div>
    <svg className="ml-[158px]" width="12" height="8" viewBox="0 0 12 8" fill="none" stroke="#222" strokeWidth="1.500"><path d="M1 7l5-5 5 5" /></svg>
    <svg className="ml-[14px]" width="18" height="12" viewBox="0 0 18 12"><path d="M4 12a4 4 0 0 1-.5-8A5 5 0 0 1 13 4a4 4 0 0 1 1 8z" fill="#1587d8" /></svg>
    <svg className="ml-[14px]" width="17" height="15" viewBox="0 0 17 15" fill="none" stroke="#222" strokeWidth="1.200"><path d="M1 5a11 11 0 0 1 15 0M3.500 8a7.500 7.500 0 0 1 10 0M6 10.500a4 4 0 0 1 5 0" /><circle cx="8.500" cy="13" r="1" fill="#222" /></svg>
    <svg className="ml-[7px]" width="16" height="14" viewBox="0 0 16 14" fill="none" stroke="#222"><path d="M1 5h3l4-4v12L4 9H1zM11 5l4 4M15 5l-4 4" /></svg>
    <svg className="ml-[6px]" width="17" height="11" viewBox="0 0 17 11" fill="none" stroke="#222" strokeWidth="1.200"><rect x=".6" y=".6" width="14" height="9.800" rx="2" /><rect x="3" y="3" width="9" height="5" fill="#222" stroke="none" /><path d="M16 4v3" /></svg>
    <div className="ml-[6px] w-[66px] text-right text-[12px] text-[#222] leading-[17px] -mt-[2px] tracking-[-0.100px] shrink-0">
      <div>8:13 AM</div>
      <div>5/6/2024</div>
    </div>
    <div className="ml-[11px] w-[15px] h-[18px] rounded-full bg-[#0b5cad] text-white text-[10px] flex items-center justify-center shrink-0">1</div>
  </div>
);

export default function App() {
  return (
    <div className="w-[1366px] h-[768px] overflow-hidden flex flex-col bg-white font-['Noto_Sans',sans-serif]">
      <ChromeBar />
      <Header />
      <Toolbar />
      <div className="flex-1 min-h-0 flex relative">
        <RailIcons />
        <FeaturePanel />
        <div className="flex-1 min-w-0"><Scene /></div>
        <Dialog />
        <ViewCube />
        <SidePanel />
      </div>
      <BottomTabs />
      <Taskbar />
    </div>
  );
}
